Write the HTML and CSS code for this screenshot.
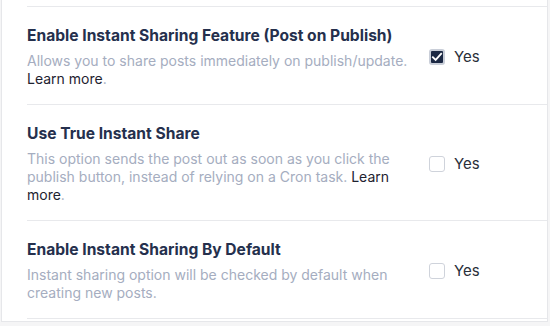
FILE: index.html
```html
<!DOCTYPE html>
<html lang="en">
<head>
<meta charset="utf-8">
<title>Instant Sharing Settings</title>
<link rel="stylesheet" href="styles.css">
</head>
<body>
<div class="card">
  <div class="rows">
    <div class="row">
      <div class="info">
        <div class="title">Enable Instant Sharing Feature (Post on Publish)</div>
        <div class="desc">Allows you to share posts immediately on publish/update. <a class="link">Learn more</a>.</div>
      </div>
      <label class="control">
        <span class="box checked">
          <svg viewBox="0 0 16 16" width="12" height="12"><path d="M2.5 8.3 L6.2 11.8 L13.5 3.8" fill="none" stroke="#fff" stroke-width="2.4" stroke-linecap="square"/></svg>
        </span>
        <span class="yes">Yes</span>
      </label>
    </div>
    <div class="row">
      <div class="info">
        <div class="title">Use True Instant Share</div>
        <div class="desc">This option sends the post out as soon as you click the publish button, instead of relying on a Cron task. <a class="link">Learn more</a>.</div>
      </div>
      <label class="control">
        <span class="box"></span>
        <span class="yes">Yes</span>
      </label>
    </div>
    <div class="row">
      <div class="info">
        <div class="title">Enable Instant Sharing By Default</div>
        <div class="desc">Instant sharing option will be checked by default when creating new posts.</div>
      </div>
      <label class="control">
        <span class="box"></span>
        <span class="yes">Yes</span>
      </label>
    </div>
  </div>
</div>
</body>
</html>
```
FILE: styles.css
```css
html, body {
  margin: 0;
  padding: 0;
}
body {
  background: #f5f5f6;
  font-family: Inter, "Noto Sans", "Liberation Sans", sans-serif;
  width: 550px;
  height: 326px;
  overflow: hidden;
}
.card {
  background: #fff;
  margin: 0 2px 0 1px;
  border: 1px solid #e6e7ea;
  border-top: none;
  padding: 6px 0 2px 25px;
}
.row {
  display: flex;
  align-items: center;
  border-top: 1px solid #e8e9ec;
  padding: 19px 0 16px 0;
}
.row:last-child {
  border-bottom: 1px solid #e8e9ec;
}
.info {
  width: 383px;
  flex: none;
}
.title {
  font-size: 15.6px;
  line-height: 20px;
  font-weight: 650;
  color: #25304d;
}
.desc {
  margin-top: 6px;
  font-size: 14px;
  line-height: 18px;
  color: #a5adc0;
}
.link {
  color: #1e2230;
}
.control {
  margin-left: 19px;
  display: flex;
  align-items: center;
}
.box {
  width: 16px;
  height: 16px;
  box-sizing: border-box;
  border: 1px solid #cfd3db;
  border-radius: 3px;
  background: #fff;
  display: flex;
  align-items: center;
  justify-content: center;
}
.box.checked {
  background: #1c2944;
  border: 2px solid #c9ced8;
}
.yes {
  margin-left: 9px;
  font-size: 15px;
  line-height: 20px;
  color: #2a2f3a;
}
```
